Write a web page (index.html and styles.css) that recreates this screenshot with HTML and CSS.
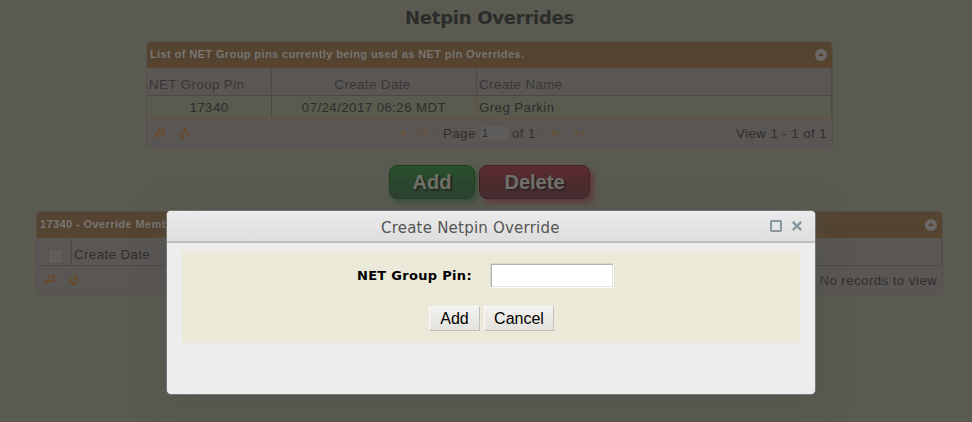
FILE: index.html
```html
<!DOCTYPE html>
<html lang="en">
<head>
<meta charset="utf-8">
<title>Netpin Overrides</title>
<link rel="stylesheet" href="styles.css">
</head>
<body>
<svg class="defs" width="0" height="0">
  <symbol id="search" viewBox="0 0 11 10"><path d="M5 1h4l1 1v3l-1 1H5L4 5V2zM4.500 5.500L1 9" fill="none" stroke="currentColor" stroke-width="1.300"/><path d="M0 8l2-1.500L3.500 7 1.500 9.500H0z" fill="currentColor"/></symbol>
  <symbol id="refresh" viewBox="0 0 10 11"><path d="M3.500 2.500H6M5 .5l2 2-2 2M7.500 3l1.500 1.500v2L7.500 8M6.500 8.500H4M5 6.500l-2 2 2 2M2.500 8L1 6.500v-2L2.500 3" fill="none" stroke="currentColor" stroke-width="1.100"/></symbol>
  <symbol id="collapse" viewBox="0 0 12 12"><circle cx="6" cy="6" r="6" fill="#6b6866"/><path d="M2.800 7L6 3.800 9.200 7z" fill="#55432d"/></symbol>
  <symbol id="first" viewBox="0 0 10 6"><path d="M1 0v6" stroke="currentColor"/><path d="M9 0v6L3 3z" fill="currentColor"/></symbol>
  <symbol id="prev" viewBox="0 0 12 6"><path d="M5 .5L1 3l4 2.500" fill="none" stroke="currentColor"/><path d="M11 0v6L5 3z" fill="currentColor"/></symbol>
</svg>
<main>
  <h1>Netpin Overrides</h1>
  <section class="grid grid-pins">
    <header class="caption"><span class="caption-pins">List of NET Group pins currently being used as NET pin Overrides.</span><svg class="collapse"><use href="#collapse"/></svg></header>
    <div class="row head"><div class="c1">NET Group Pin</div><div class="c2">Create Date</div><div class="c3">Create Name</div></div>
    <div class="row body"><div class="c1">17340</div><div class="c2 stamp">07/24/2017 06:26 MDT</div><div class="c3">Greg Parkin</div></div>
    <footer class="foot">
      <svg class="search"><use href="#search"/></svg><svg class="refresh"><use href="#refresh"/></svg>
      <div class="pager">
        <svg class="first"><use href="#first"/></svg><svg class="prev"><use href="#prev"/></svg>
        <i class="sep"></i><span class="page">Page</span><span class="pagebox">1</span><span class="of">of 1</span><i class="sep"></i>
        <svg class="prev flip"><use href="#prev"/></svg><svg class="first flip"><use href="#first"/></svg>
      </div>
      <span class="info">View 1 - 1 of 1</span>
    </footer>
  </section>
  <div class="actions"><button class="big add">Add</button><button class="big delete">Delete</button></div>
  <section class="grid grid-members">
    <header class="caption"><span>17340 - Override Members</span><svg class="collapse"><use href="#collapse"/></svg></header>
    <div class="row head dark"><div class="ccheck"><i class="check"></i></div><div class="c3">Create Date</div></div>
    <footer class="foot"><svg class="search"><use href="#search"/></svg><svg class="refresh"><use href="#refresh"/></svg><span class="info">No records to view</span></footer>
  </section>
</main>
<div class="dialog">
  <header class="bar"><span class="title">Create Netpin Override</span>
    <svg class="max" viewBox="0 0 12 12"><rect x="1" y="1" width="10" height="10" rx="1" fill="none" stroke="#8798a0" stroke-width="2"/></svg>
    <svg class="close" viewBox="0 0 12 12"><path d="M1.800 1.800l8.400 8.400M10.200 1.800l-8.400 8.400" stroke="#8798a0" stroke-width="2.500"/></svg>
  </header>
  <form class="form">
    <div class="field"><label for="pin">NET Group Pin:</label><input id="pin" type="text"></div>
    <div class="buttons"><button type="button" class="b-add">Add</button><button type="button" class="b-cancel">Cancel</button></div>
  </form>
</div>
</body>
</html>
```
FILE: styles.css
```css
* { box-sizing: border-box; }
body { margin: 0; height: 422px; overflow: hidden; position: relative; background: #5a5a50; color: #2e2e2d; font: 13.33px "Liberation Sans", Arial, sans-serif; white-space: nowrap; }
.defs { position: absolute; }
svg { display: block; flex: none; }
main { display: flex; flex-direction: column; align-items: center; width: 979px; }
h1 { margin: 7px 0 0; height: 34px; font: bold 18px/21px "DejaVu Sans", sans-serif; letter-spacing: -.25px; color: #2c2c2b; }
.grid { border: 1px solid #53514d; border-radius: 5px; background: #5a5654; overflow: hidden; letter-spacing: .4px; }
.grid-pins { width: 687px; height: 107px; }
.grid-members { width: 907px; height: 84px; }
.caption { height: 26px; padding: 0 5px 0 3px; display: flex; align-items: center; justify-content: space-between; background: linear-gradient(#554431, #554430 50%, #514230 50%, #58452f); color: #797571; font-size: 11px; font-weight: bold; letter-spacing: .4px; }
.caption span { line-height: 24px; height: 26px; }
.collapse { width: 12px; height: 12px; }
.row { display: flex; border-right: 1px solid #4d4a48; }
.row > div { border-right: 1px solid #4b4846; }
.row > .c3 { flex: 1; padding-left: 2px; border: 0; }
.c1 { width: 125px; padding-left: 2px; }
.c2 { width: 205px; text-align: center; }
.head { height: 28px; border-bottom: 1px solid #4b4947; line-height: 33px; color: #383736; }
.head .c2 { padding-right: 3px; }
.dark { color: #2e2e2d; }
.body { height: 23px; line-height: 23px; background: #5a5a4f; border-bottom: 1px solid #625238; }
.body .c1 { text-align: center; padding: 0; }
.body .c2 { border-color: #625238; }
.foot { height: 28px; padding: 0 5px 0 7px; display: flex; align-items: center; }
.search { width: 11px; height: 10px; color: #6c461f; }
.refresh { width: 10px; height: 11px; margin-left: 14px; color: #6c461f; }
.pager { display: flex; align-items: center; margin-left: 207px; }
.first, .prev { color: #67523b; height: 6px; }
.first { width: 10px; }
.prev { width: 12px; margin-left: 10px; }
.flip { transform: scaleX(-1); }
.prev.flip { margin-left: 9px; }
.first.flip { margin-left: 11px; }
.sep { width: 1px; height: 18px; margin-left: 10px; background: #555250; }
.page { margin-left: 4px; width: 32px; }
.pagebox { width: 29px; height: 14px; margin-left: 5px; padding-left: 2px; border-radius: 5px; background: #5f5d5c; font-size: 11px; line-height: 15px; }
.of { margin-left: 3px; width: 24px; }
.of + .sep { margin-left: 5px; }
.info { margin-left: auto; }
.actions { display: flex; gap: 4px; margin-top: 17px; height: 46px; }
.big { height: 34px; padding: 0; border-radius: 8px; font: bold 20px/32px "Liberation Sans", Arial, sans-serif; color: #71716a; text-shadow: 2px 2px 1px #242c24; }
.add { width: 86px; border: 1px solid #203e24; background: linear-gradient(#28502d, #2d412f); box-shadow: 3px 4px 5px #39513a; }
.delete { width: 111px; border: 1px solid #421f23; background: linear-gradient(#5c2b30, #412e2e); box-shadow: 4px 4px 5px #603c3e; text-shadow: 2px 2px 1px #322526; }
.ccheck { width: 34px; padding: 11px 0 0 11px; }
.row > .ccheck { width: 35px; }
.check { display: block; width: 13px; height: 13px; background: #5f5e5d; border: 1px solid #666360; border-top-color: #53504e; border-left-color: #53504e; }
.dialog { position: absolute; left: 166px; top: 210px; width: 650px; height: 185px; border: 1px solid #757575; border-radius: 5px; background: #ededed; box-shadow: 0 5px 30px rgba(75,80,77,.5); overflow: hidden; }
.bar { height: 32px; display: flex; align-items: center; padding: 0 12px 0 214px; border-bottom: 2px solid #bdbdbd; background: linear-gradient(#ebebeb, #dedede); }
.title { font: 15px/34px "DejaVu Sans", sans-serif; letter-spacing: .22px; height: 30px; color: #555; }
.max { width: 12px; height: 12px; margin-left: auto; }
.close { width: 12px; height: 12px; margin-left: 9px; }
.form { margin: 8px 15px 0; height: 92px; background: #ebe9d8; color: #000; }
.field { display: flex; padding: 12px 0 0 175px; }
.field label { width: 133px; font: bold 13px/25px "DejaVu Sans", sans-serif; letter-spacing: .3px; }
.field input { width: 124px; height: 25px; border: 1px solid #d9d6ca; border-right-color: #fff; border-bottom-color: #fff; outline: 0; background: #fff; box-shadow: inset 1px 1px #b5b1ac, inset -1px -1px #e5e3dc; }
.buttons { display: flex; gap: 4px; padding: 18px 0 0 247px; }
.buttons button { height: 25px; padding: 0; border: 1px solid #fafafa; border-right-color: #bfbebb; border-bottom-color: #bfbebb; background: linear-gradient(#f2f1ed, #e4e2de); color: #000; font: 16px/23px "Liberation Sans", Arial, sans-serif; }
.b-add { width: 51px; }
.b-cancel { width: 70px; }
```
